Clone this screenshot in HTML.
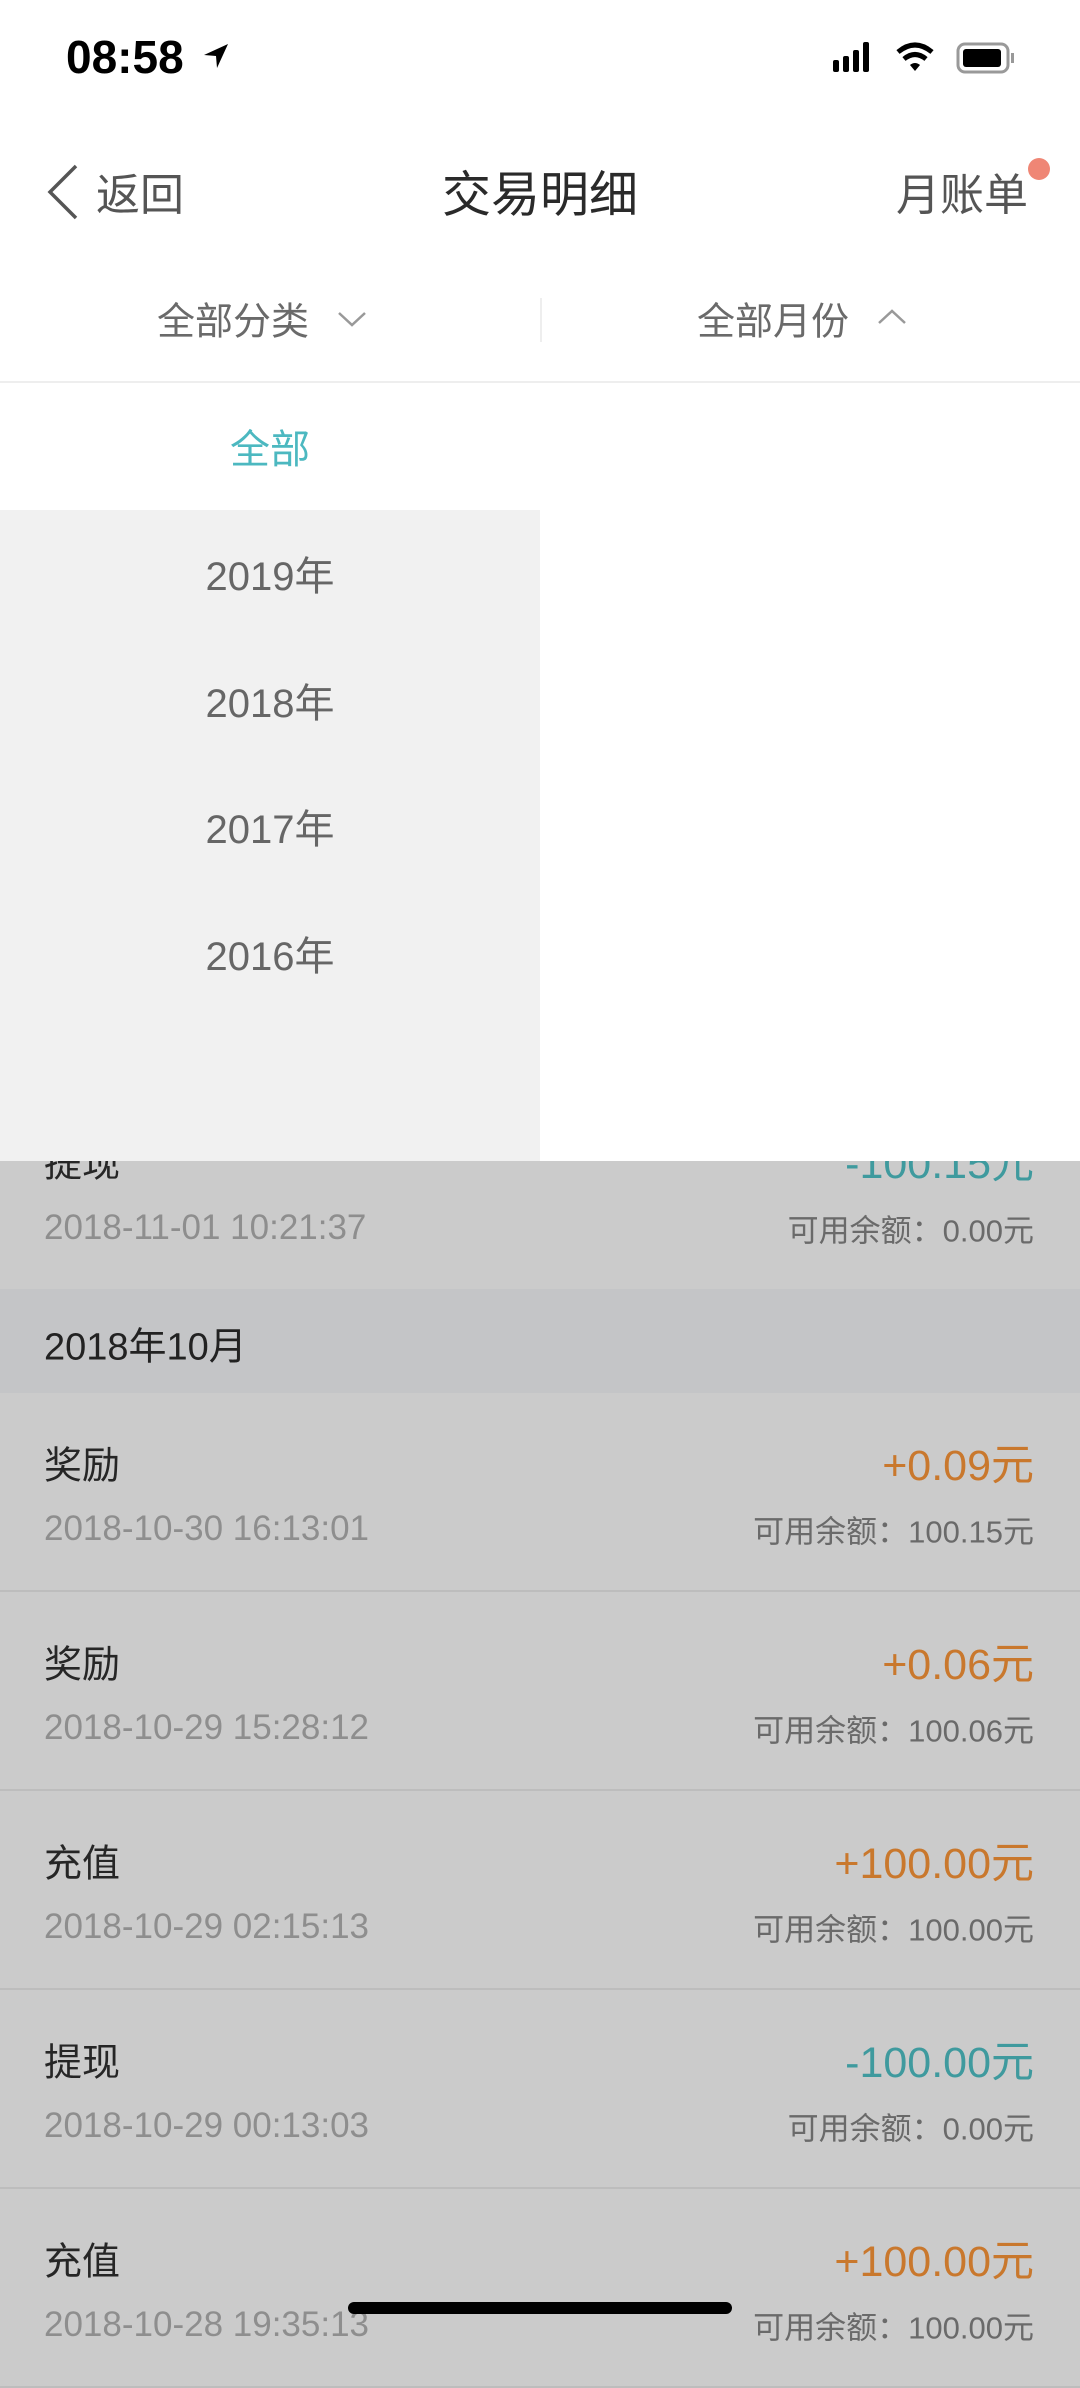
<!DOCTYPE html>
<html><head><meta charset="utf-8"><style>
*{margin:0;padding:0;box-sizing:border-box}
body{width:1080px;height:2339px;overflow:hidden;background:#cbcbcb;font-family:"Liberation Sans","Noto Sans CJK SC",sans-serif;position:relative}
.a{position:absolute;white-space:nowrap}
.c{transform:translateY(-50%)}
.row{position:absolute;left:0;width:1080px;height:199px;border-bottom:2px solid #bdbdbd;background:#cbcbcb}
.t{position:absolute;left:44px;top:69px;transform:translateY(-50%);font-size:38px;color:#262626}
.d{position:absolute;left:44px;top:136px;transform:translateY(-50%);font-size:35px;color:#8e8e8e}
.m{position:absolute;right:46px;top:69px;transform:translateY(-50%);font-size:43px}
.b{position:absolute;right:46px;top:136px;transform:translateY(-50%);font-size:31px;color:#6a6a6a}
.o{color:#c9782d}.g{color:#3f9a9e}
</style></head><body>
<div class="a" style="left:0;top:0;width:1080px;height:1161px;background:#fff"></div>
<div class="a c" style="left:66px;top:57px;font-size:46px;font-weight:bold;color:#000">08:58</div>
<svg class="a" style="left:200px;top:40px" width="32" height="32" viewBox="0 0 32 32"><path d="M28 4 L4 15 L16 16 L17 28 Z" fill="#000"/></svg>
<svg class="a" style="left:830px;top:38px" width="200" height="40" viewBox="0 0 200 40">
<rect x="3" y="22" width="6" height="12" rx="2"/><rect x="13" y="18" width="6" height="16" rx="2"/><rect x="23" y="12" width="6" height="22" rx="2"/><rect x="33" y="4" width="6" height="30" rx="2"/>
<path d="M68 14 Q85 0 102 14" stroke="#000" stroke-width="5" fill="none"/><path d="M74 21 Q85 12 96 21" stroke="#000" stroke-width="5" fill="none"/><path d="M80 27 L85 33 L90 27 Q85 23 80 27Z"/>
<rect x="128" y="6" width="50" height="28" rx="7" fill="none" stroke="#999" stroke-width="3"/><rect x="133" y="11" width="38" height="18" rx="3"/><rect x="181" y="15" width="3" height="10" fill="#999"/></svg>
<svg class="a" style="left:46px;top:164px" width="34" height="56" viewBox="0 0 34 56"><path d="M30 2 L4 28 L30 54" stroke="#555" stroke-width="3.5" fill="none"/></svg>
<div class="a c" style="left:96px;top:191px;font-size:44px;color:#555">返回</div>
<div class="a c" style="left:0;width:1080px;text-align:center;top:191px;font-size:49px;color:#2a2a2a">交易明细</div>
<div class="a c" style="left:896px;top:191px;font-size:44px;color:#555">月账单</div>
<div class="a" style="left:1028px;top:158px;width:22px;height:22px;border-radius:50%;background:#ef8675"></div>
<div class="a c" style="left:157px;top:318px;font-size:38px;color:#6a6a6a">全部分类</div>
<svg class="a" style="left:337px;top:310px" width="30" height="18" viewBox="0 0 30 18"><path d="M2 3 L15 15 L28 3" stroke="#999" stroke-width="2.5" fill="none"/></svg>
<div class="a" style="left:540px;top:298px;width:2px;height:44px;background:#eee"></div>
<div class="a c" style="left:697px;top:318px;font-size:38px;color:#6a6a6a">全部月份</div>
<svg class="a" style="left:877px;top:308px" width="30" height="18" viewBox="0 0 30 18"><path d="M2 15 L15 3 L28 15" stroke="#999" stroke-width="2.5" fill="none"/></svg>
<div class="a" style="left:0;top:381px;width:1080px;height:2px;background:#eee"></div>
<div class="a c" style="left:0;width:540px;text-align:center;top:446px;font-size:40px;color:#4cb8c0">全部</div>
<div class="a" style="left:0;top:510px;width:540px;height:651px;background:#f1f1f1"></div>
<div class="a c" style="left:0;width:540px;text-align:center;top:573px;font-size:40px;color:#666">2019年</div>
<div class="a c" style="left:0;width:540px;text-align:center;top:700px;font-size:40px;color:#666">2018年</div>
<div class="a c" style="left:0;width:540px;text-align:center;top:826px;font-size:40px;color:#666">2017年</div>
<div class="a c" style="left:0;width:540px;text-align:center;top:953px;font-size:40px;color:#666">2016年</div>
<div class="a" style="left:0;top:1161px;width:1080px;height:128px;overflow:hidden">
<div class="a c" style="left:44px;top:-1px;font-size:38px;color:#262626">提现</div>
<div class="a c g" style="right:46px;top:-1px;font-size:43px">-100.15元</div>
<div class="a c" style="left:44px;top:67px;font-size:35px;color:#8e8e8e">2018-11-01 10:21:37</div>
<div class="a c" style="right:46px;top:67px;font-size:31px;color:#6a6a6a">可用余额：0.00元</div>
</div>
<div class="a" style="left:0;top:1289px;width:1080px;height:104px;background:#c4c5c7"></div>
<div class="a c" style="left:44px;top:1343px;font-size:38px;color:#222">2018年10月</div>
<div class="row" style="top:1393px"><div class="t">奖励</div><div class="d">2018-10-30 16:13:01</div><div class="m o">+0.09元</div><div class="b">可用余额：100.15元</div></div>
<div class="row" style="top:1592px"><div class="t">奖励</div><div class="d">2018-10-29 15:28:12</div><div class="m o">+0.06元</div><div class="b">可用余额：100.06元</div></div>
<div class="row" style="top:1791px"><div class="t">充值</div><div class="d">2018-10-29 02:15:13</div><div class="m o">+100.00元</div><div class="b">可用余额：100.00元</div></div>
<div class="row" style="top:1990px"><div class="t">提现</div><div class="d">2018-10-29 00:13:03</div><div class="m g">-100.00元</div><div class="b">可用余额：0.00元</div></div>
<div class="row" style="top:2189px"><div class="t">充值</div><div class="d">2018-10-28 19:35:13</div><div class="m o">+100.00元</div><div class="b">可用余额：100.00元</div></div>
<div class="a" style="left:348px;top:2302px;width:384px;height:12px;border-radius:6px;background:#000"></div>
</body></html>
